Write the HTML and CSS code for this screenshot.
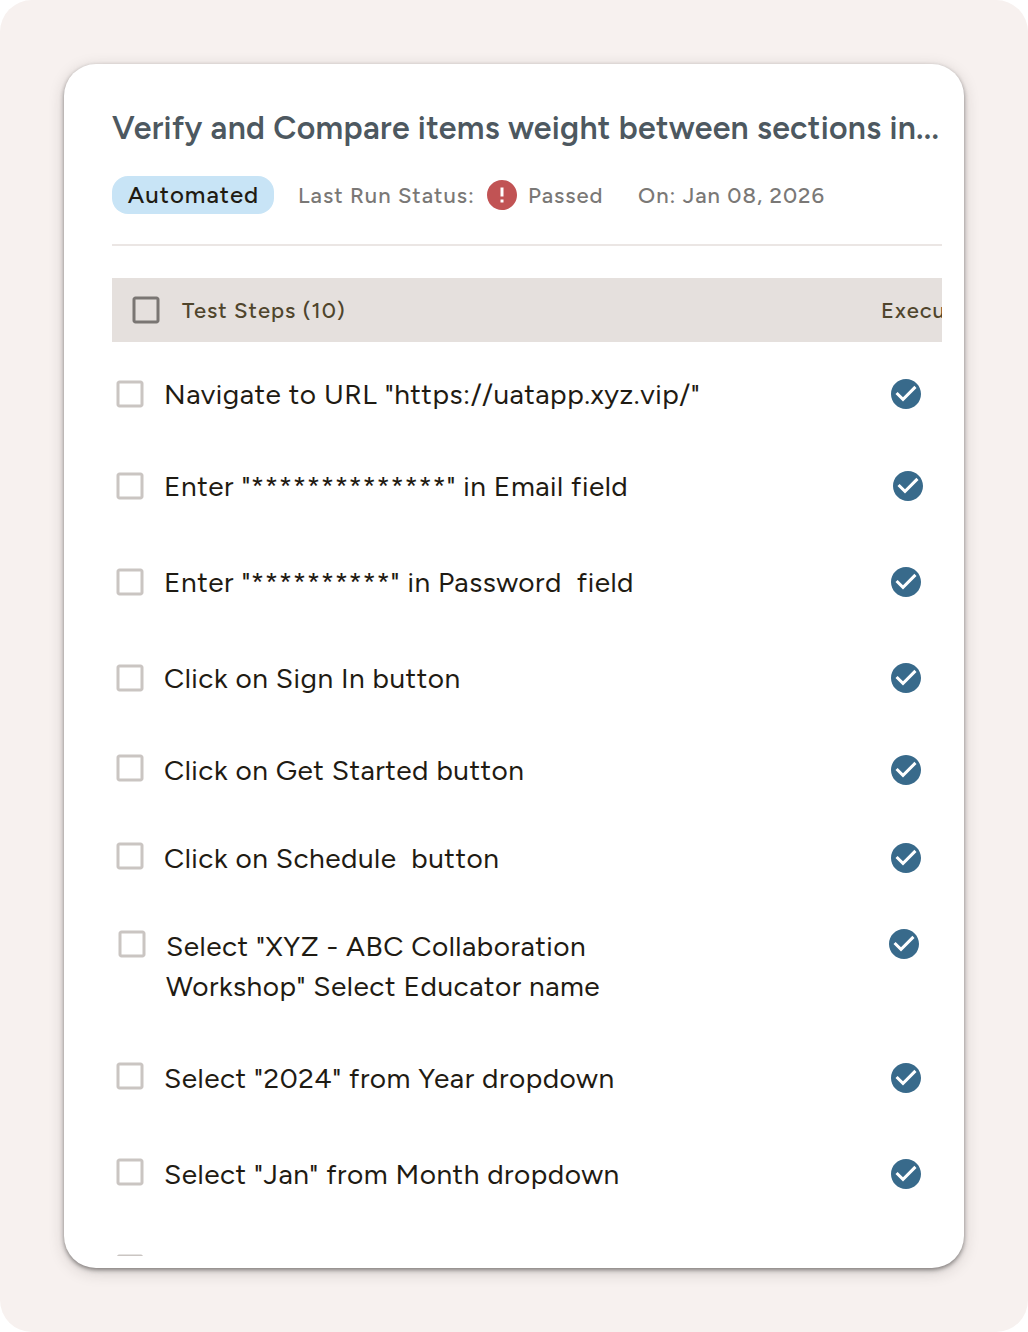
FILE: index.html
```html
<!DOCTYPE html>
<html lang="en">
<head>
    <meta charset="UTF-8">
    <meta name="viewport" content="width=device-width, initial-scale=1.0">
    <title>Test Case</title>
    <link rel="stylesheet" href="styles.css">
</head>
<body>
    <!-- Shared icons -->
    <svg width="0" height="0" class="sprite">
        <symbol id="box" viewBox="0 0 24 24"><path d="M19 5v14H5V5h14m0-2H5c-1.1 0-2 .9-2 2v14c0 1.1.9 2 2 2h14c1.1 0 2-.9 2-2V5c0-1.1-.9-2-2-2z"/></symbol>
        <symbol id="check" viewBox="0 0 24 24"><path d="M12 2C6.48 2 2 6.48 2 12s4.48 10 10 10 10-4.48 10-10S17.52 2 12 2zm-2 15l-5-5 1.41-1.41L10 14.17l7.59-7.59L19 8l-9 9z"/></symbol>
        <symbol id="error" viewBox="0 0 24 24"><path d="M12 2C6.48 2 2 6.48 2 12s4.48 10 10 10 10-4.48 10-10S17.52 2 12 2zm1 15h-2v-2h2v2zm0-4h-2V7h2v6z"/></symbol>
    </svg>

    <div class="page">
        <div class="card">
            <h2 class="title">Verify and Compare items weight between sections in...</h2>
            <div class="meta">
                <span class="chip">Automated</span>
                <span class="status-label">Last Run Status:</span>
                <svg class="icon error"><use href="#error"/></svg>
                <span class="status">Passed</span>
                <span class="date">On: Jan 08, 2026</span>
            </div>

            <div class="steps-header">
                <svg class="icon box"><use href="#box"/></svg>
                <span class="steps-title">Test Steps (10)</span>
                <span class="exec-title">Execu</span>
            </div>

            <div class="steps">
                <div class="step medium">
                    <svg class="icon box"><use href="#box"/></svg>
                    <p>Navigate to URL "https://uatapp.xyz.vip/"</p>
                    <svg class="icon check"><use href="#check"/></svg>
                </div>
                <div class="step shifted">
                    <svg class="icon box"><use href="#box"/></svg>
                    <p>Enter "**************" in Email field</p>
                    <svg class="icon check"><use href="#check"/></svg>
                </div>
                <div class="step">
                    <svg class="icon box"><use href="#box"/></svg>
                    <p>Enter "**********" in Password&nbsp; field</p>
                    <svg class="icon check"><use href="#check"/></svg>
                </div>
                <div class="step medium">
                    <svg class="icon box"><use href="#box"/></svg>
                    <p>Click on Sign In button</p>
                    <svg class="icon check"><use href="#check"/></svg>
                </div>
                <div class="step tight raised">
                    <svg class="icon box"><use href="#box"/></svg>
                    <p>Click on Get Started button</p>
                    <svg class="icon check"><use href="#check"/></svg>
                </div>
                <div class="step tight raised">
                    <svg class="icon box"><use href="#box"/></svg>
                    <p>Click on Schedule&nbsp; button</p>
                    <svg class="icon check"><use href="#check"/></svg>
                </div>
                <div class="step medium raised inset">
                    <svg class="icon box"><use href="#box"/></svg>
                    <p>Select "XYZ - ABC Collaboration<br>Workshop" Select Educator name</p>
                    <svg class="icon check"><use href="#check"/></svg>
                </div>
                <div class="step raised">
                    <svg class="icon box"><use href="#box"/></svg>
                    <p>Select "2024" from Year dropdown</p>
                    <svg class="icon check"><use href="#check"/></svg>
                </div>
                <div class="step raised">
                    <svg class="icon box"><use href="#box"/></svg>
                    <p>Select "Jan" from Month dropdown</p>
                    <svg class="icon check"><use href="#check"/></svg>
                </div>
                <div class="step raised">
                    <svg class="icon box"><use href="#box"/></svg>
                </div>
            </div>
        </div>
    </div>
</body>
</html>
```

FILE: styles.css
```css
* {
    box-sizing: border-box;
}
body {
    font-family: Figtree, Lato, sans-serif;
    background-color: white;
    color: #1f1b13;
    margin: 0;
}
.sprite {
    display: none;
}
.page {
    background-color: #f7f1ef;
    height: 1332px;
    padding: 64px;
    border-radius: 32px;
}
.card {
    background-color: white;
    height: 1204px;
    padding: 44px 22px 12px 48px;
    border-radius: 32px;
    box-shadow: 0 2px 4px rgba(40, 36, 36, 0.5), 0 4px 16px rgba(40, 36, 36, 0.18);
    display: flex;
    flex-direction: column;
}
.icon {
    width: 36px;
    height: 36px;
    flex: none;
}
.title {
    margin: 0;
    color: #4d5860;
    font-size: 32px;
    font-weight: 600;
    line-height: 40px;
    letter-spacing: 0.3px;
    white-space: nowrap;
}
.meta {
    display: flex;
    align-items: center;
    height: 98px;
    padding-bottom: 2px;
    border-bottom: 2px solid #ebe6e4;
    color: #7a7876;
    font-size: 22px;
    font-weight: 500;
    letter-spacing: 1px;
    white-space: nowrap;
}
.chip {
    width: 162px;
    height: 38px;
    padding-left: 1px;
    border-radius: 16px;
    background-color: #c8e4f6;
    color: #1f1b13;
    font-size: 24px;
    line-height: 38px;
    text-align: center;
}
.status-label {
    width: 186px;
    margin-left: 24px;
}
.error {
    fill: #c15354;
}
.status {
    width: 110px;
    margin-left: 8px;
}
.steps-header {
    display: flex;
    align-items: center;
    height: 64px;
    flex: none;
    margin-top: 32px;
    padding-left: 16px;
    background-color: #e5e0dd;
    color: #4f452c;
    font-size: 22px;
    font-weight: 500;
    letter-spacing: 1px;
    overflow: hidden;
}
.box {
    fill: #cac5c2;
}
.steps-header .box {
    fill: #7a7673;
}
.steps-title {
    width: 699px;
    flex: none;
    margin-left: 18px;
}
.steps {
    flex: 1;
    padding-top: 32px;
    overflow: hidden;
}
.step {
    display: flex;
    align-items: flex-start;
    padding: 0 18px 56px 0;
}
.step.medium {
    padding-bottom: 52px;
}
.step.tight {
    padding-bottom: 48px;
}
.step.shifted {
    padding-right: 16px;
}
.step.inset {
    padding-left: 2px;
    padding-right: 20px;
}
.step p {
    flex: 1;
    margin: 0 0 0 16px;
    font-size: 28px;
    line-height: 40px;
    letter-spacing: 0.5px;
    white-space: nowrap;
}
.step .icon {
    margin-top: 2px;
}
.step.raised .box, .step.inset .check {
    margin-top: 0;
}
.check {
    fill: #386a8b;
}
```
